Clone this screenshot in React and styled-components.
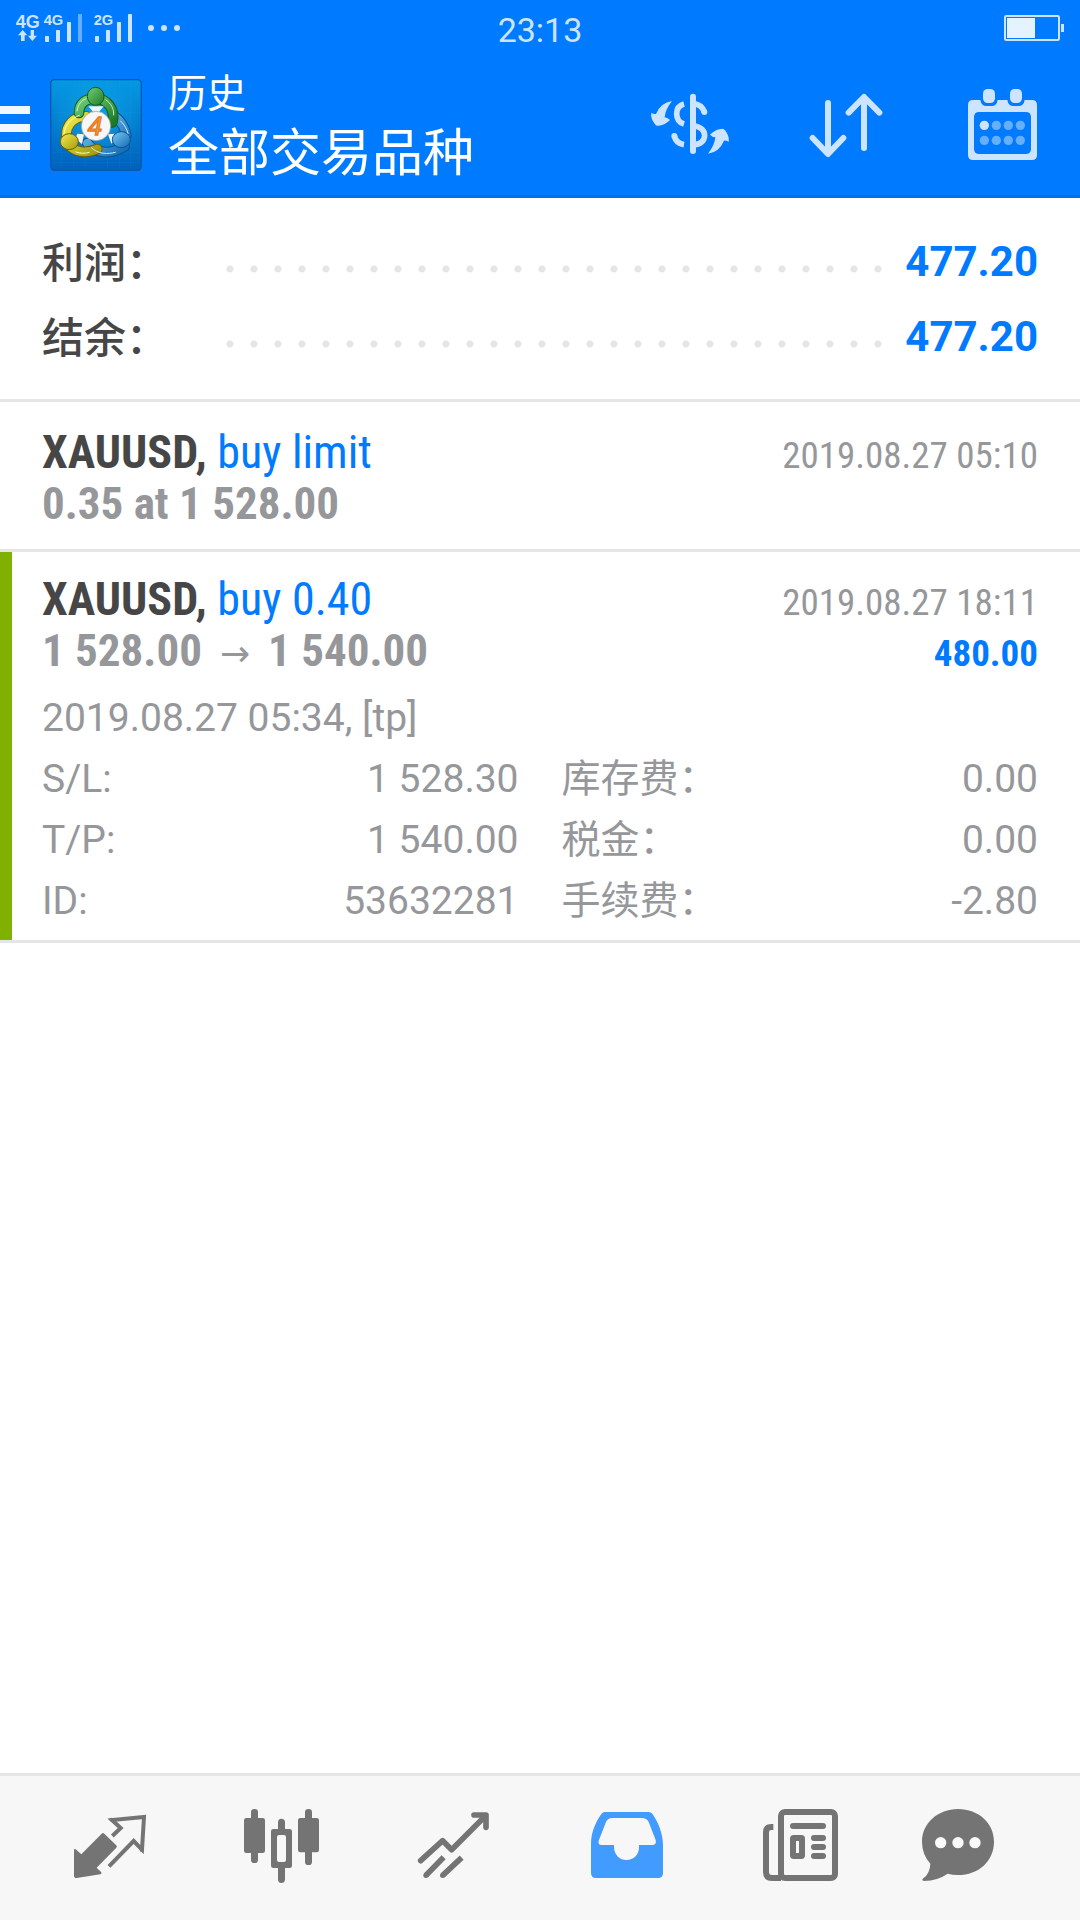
import React from 'react';
import styled, { createGlobalStyle } from 'styled-components';

const summary = [
	{ label: '利润：', value: '477.20' },
	{ label: '结余：', value: '477.20' }
];

const orders = [
	{
		symbol: 'XAUUSD',
		side: 'buy limit',
		time: '2019.08.27 05:10',
		price: ['0.35 at 1 528.00']
	},
	{
		symbol: 'XAUUSD',
		side: 'buy 0.40',
		time: '2019.08.27 18:11',
		price: ['1 528.00', '1 540.00'],
		profit: '480.00',
		comment: '2019.08.27 05:34, [tp]',
		takeProfit: true,
		details: [
			['S/L:', '1 528.30'],
			['库存费：', '0.00'],
			['T/P:', '1 540.00'],
			['税金：', '0.00'],
			['ID:', '53632281'],
			['手续费：', '-2.80']
		]
	}
];

const GlobalStyle = createGlobalStyle`
	* {
		box-sizing: border-box;
	}
	body {
		margin: 0;
		background: #fff;
		font-family: Roboto, 'Noto Sans CJK SC', sans-serif;
	}
	button {
		border: none;
		padding: 0;
		background: transparent;
		font: inherit;
		cursor: pointer;
	}
	svg {
		display: block;
	}
`;

const narrow = `'Roboto Condensed', 'Liberation Sans Narrow', Roboto, sans-serif`;

const Page = styled.div`
	display: flex;
	flex-direction: column;
	min-height: 100vh;
`;
const Header = styled.header`
	background: #007aff;
	border-bottom: 3px solid #006ee6;
`;
const StatusBar = styled.div`
	display: grid;
	grid-template-columns: 1fr auto 1fr;
	align-items: center;
	height: 55px;
	padding: 0 16px;
`;
const Clock = styled.time`
	padding-top: 4px;
	font-size: 34px;
	line-height: 40px;
	color: #cce4ff;
`;
const Battery = styled.svg`
	justify-self: end;
`;
const Toolbar = styled.div`
	display: flex;
	align-items: center;
	height: 140px;
`;
const Logo = styled.svg`
	margin: 0 26px 0 20px;
`;
const Titles = styled.div`
	flex: 1;
	padding-top: 6px;
	color: #fff;
`;
const Section = styled.div`
	font-size: 39px;
	line-height: 52px;
`;
const Title = styled.h1`
	margin: 0;
	font-size: 51px;
	font-weight: 400;
	line-height: 68px;
`;
const ToolButton = styled.button`
	display: flex;
	justify-content: center;
	width: 156px;
	color: #cce4ff;
`;

const Summary = styled.dl`
	margin: 0;
	padding: 26px 42px 25px;
	border-bottom: 3px solid #e5e5e5;
`;
const SummaryRow = styled.div`
	display: flex;
	align-items: center;
	height: 75px;
	font-size: 42px;
	font-weight: 700;
`;
const SummaryLabel = styled.dt`
	width: 184px;
	padding-bottom: 4px;
	font-weight: 500;
	color: #464646;
`;
const Dots = styled.span`
	flex: 1;
	height: 8px;
	margin: 14px 22px 0 0;
	background: radial-gradient(circle at 4px 4px, #e5e5e5 3px, transparent 4px) 0 0 / 24px 8px repeat-x;
`;
const SummaryValue = styled.dd`
	margin: 0;
	color: #007aff;
`;

const Main = styled.main`
	flex: 1;
`;
const Orders = styled.section`
	padding-top: 3px;
`;
const Order = styled.article`
	padding: 22px 42px ${p => (p.$expanded ? '8px' : '20px')} 30px;
	border-left: 12px solid ${p => (p.$takeProfit ? '#80b000' : 'transparent')};
`;
const Divider = styled.hr`
	height: 3px;
	margin: 0;
	border: none;
	background: #e5e5e5;
`;
const OrderRow = styled.div`
	display: flex;
	justify-content: space-between;
	align-items: baseline;
	height: 51px;
	font-family: ${narrow};
	line-height: 51px;
`;
const Symbol = styled.h2`
	margin: 0;
	font-size: 46px;
	color: #464646;
`;
const Side = styled.span`
	font-weight: 400;
	color: #007aff;
`;
const Time = styled.time`
	font-size: 37px;
	line-height: 40px;
	color: #96979b;
`;
const Price = styled.span`
	font-size: 45px;
	font-weight: 700;
	color: #96979b;
`;
const Arrow = styled.span`
	padding: 0 18px;
	font-family: 'DejaVu Sans', sans-serif;
	font-size: 36px;
	font-weight: 400;
	line-height: 36px;
`;
const Profit = styled.span`
	font-size: 37px;
	font-weight: 700;
	line-height: 40px;
	color: #007aff;
`;
const Comment = styled.p`
	margin: 12px 0 0;
	font-size: 39px;
	line-height: 61px;
	color: #96979b;
`;
const Details = styled.dl`
	display: grid;
	grid-template-columns: 1fr 1fr;
	column-gap: 43px;
	margin: 0;
`;
const Detail = styled.div`
	display: flex;
	justify-content: space-between;
	height: 61px;
	font-size: 39px;
	line-height: 61px;
	color: #96979b;

	dd {
		margin: 0;
	}
`;
const DetailLabel = styled.dt`
	font-weight: 400;
`;

const TabBar = styled.nav`
	display: flex;
	align-items: center;
	height: 147px;
	padding: 0 24px;
	background: #f7f7f7;
	border-top: 3px solid #e5e5e5;
`;
const Tab = styled.button`
	display: flex;
	flex: 1;
	justify-content: center;
	color: ${p => (p.$active ? '#429bff' : '#747474')};
`;

const Signal = () => (
	<svg width='168' height='34' viewBox='48 30 504 102' fill='#cce4ff'>
		<g fontFamily='Liberation Sans' fontWeight='700'>
			<text x='47' y='81' fontSize='54'>4G</text>
			<text x='131' y='72' fontSize='44'>4G</text>
			<text x='281' y='72' fontSize='44'>2G</text>
		</g>
		<path d='M68 87l14 16h-8v17H63v-17H54zM97 120L84 104h8V87h10v17h9z' />
		<rect x='135' y='105' width='12' height='18' rx='2' />
		<rect x='168' y='87' width='12' height='36' rx='2' />
		<rect x='201' y='63' width='12' height='60' rx='2' />
		<rect x='234' y='39' width='12' height='84' rx='2' opacity='.5' />
		<rect x='285' y='105' width='12' height='18' rx='2' />
		<rect x='318' y='87' width='12' height='36' rx='2' />
		<rect x='351' y='63' width='12' height='60' rx='2' />
		<rect x='384' y='39' width='12' height='84' rx='2' />
		<circle cx='453' cy='81' r='9' />
		<circle cx='492' cy='81' r='9' />
		<circle cx='531' cy='81' r='9' />
	</svg>
);

const MenuIcon = () => (
	<svg width='30' height='90' viewBox='0 80 30 90' fill='#f0f7ff'>
		<path d='M0 106h30v8H0zM0 124h30v8H0zM0 142h30v8H0z' />
	</svg>
);

const AppLogo = () => (
	<Logo width='92' height='92' viewBox='150 240 276 276'>
		<defs>
			<linearGradient id='tile' x1='0' y1='0' x2='0' y2='1'>
				<stop offset='0' stopColor='#0598e2' />
				<stop offset='1' stopColor='#0062bd' />
			</linearGradient>
			<radialGradient id='glow'>
				<stop offset='0' stopColor='#18b4f0' stopOpacity='.6' />
				<stop offset='1' stopColor='#18b4f0' stopOpacity='0' />
			</radialGradient>
			<linearGradient id='green' x1='0' y1='0' x2='1' y2='1'>
				<stop offset='0' stopColor='#74cf78' />
				<stop offset='1' stopColor='#1c7a26' />
			</linearGradient>
			<linearGradient id='yellow' x1='0' y1='0' x2='1' y2='1'>
				<stop offset='0' stopColor='#f4ec4a' />
				<stop offset='1' stopColor='#a39a12' />
			</linearGradient>
			<linearGradient id='blue' x1='0' y1='0' x2='1' y2='1'>
				<stop offset='0' stopColor='#7cc8f2' />
				<stop offset='1' stopColor='#0f6bb4' />
			</linearGradient>
		</defs>
		<rect x='152' y='242' width='272' height='272' rx='12' fill='url(#tile)' stroke='#0757ac' strokeWidth='4' />
		<path
			d='M185 244v268M220 244v268M255 244v268M323 244v268M358 244v268M392 244v268M154 300h268M154 340h268M154 460h268M154 490h268'
			stroke='#3cb2ee'
			strokeOpacity='.14'
			strokeWidth='2'
		/>
		<circle cx='288' cy='360' r='130' fill='url(#glow)' />
		<g fill='none' strokeLinecap='round'>
			<path d='M342 352C362 362 376 388 379 410M262 432C282 462 330 470 374 442' stroke='#0c4f92' strokeWidth='32' />
			<path d='M342 352C362 362 376 388 379 410M262 432C282 462 330 470 374 442' stroke='url(#blue)' strokeWidth='26' />
			<path d='M259 352C222 352 198 376 199 412M212 444C236 464 262 462 292 450' stroke='#676008' strokeWidth='32' />
			<path d='M259 352C222 352 198 376 199 412M212 444C236 464 262 462 292 450' stroke='url(#yellow)' strokeWidth='26' />
			<path d='M237 342C237 312 258 298 287 298C320 300 348 330 337 370' stroke='#125b1b' strokeWidth='32' />
			<path d='M237 342C237 312 258 298 287 298C320 300 348 330 337 370' stroke='url(#green)' strokeWidth='26' />
			<path d='M231 336C234 316 244 304 258 299M318 303C334 314 342 330 341 348' stroke='#c9f3c6' strokeWidth='3' />
			<path d='M192 404C194 380 212 358 238 349M228 459C240 464 256 464 268 460' stroke='#fffbb0' strokeWidth='3' />
			<path d='M274 446C294 466 324 466 346 460M362 366C374 378 382 392 384 404' stroke='#c9eaff' strokeWidth='3' />
		</g>
		<path d='M265 322h46l-14 16h-18zM232 404l20 2-6 30-20-18zM346 404l-22 2 10 28 14-14z' fill='#f2f5ef' />
		<ellipse cx='287' cy='292' rx='25' ry='27' fill='url(#green)' stroke='#125b1b' strokeWidth='3' />
		<ellipse cx='208' cy='428' rx='27' ry='24' fill='url(#yellow)' stroke='#676008' strokeWidth='3' />
		<ellipse cx='364' cy='422' rx='27' ry='24' fill='url(#blue)' stroke='#0c4f92' strokeWidth='3' />
		<circle cx='288' cy='381' r='44' fill='#f6f7f8' stroke='#9a9a9a' strokeWidth='2' />
		<text
			x='285'
			y='407'
			textAnchor='middle'
			fontFamily='Liberation Sans'
			fontStyle='italic'
			fontWeight='400'
			fontSize='78'
			fill='#fba92c'
			stroke='#e87a25'
			strokeWidth='4'
		>
			4
		</text>
	</Logo>
);

const CurrencyIcon = () => (
	<svg width='96' height='96' viewBox='66 51 288 288' fill='none' stroke='currentColor' strokeWidth='17'>
		<path d='M219 110v163' strokeWidth='18' strokeLinecap='round' />
		<path d='M219 131Q245 133 253 156M192 132Q170 138 170 161Q170 185 192 192M163 228Q168 250 192 254M222 197Q254 203 254 227Q252 251 222 254' />
		<g fill='currentColor' stroke='none'>
			<circle cx='253' cy='156' r='9' />
			<circle cx='163' cy='228' r='9' />
			<path id='swap' d='M156 123Q122 128 108 162Q100 163 94 158Q91 175 105 193Q109 199 117 197Q135 195 150 180Q142 172 134 172Q136 148 156 123Z' />
			<use href='#swap' transform='rotate(180 210 202)' />
		</g>
	</svg>
);

const SortIcon = () => (
	<svg width='96' height='96' viewBox='534 51 288 288' fill='none' stroke='currentColor' strokeWidth='18' strokeLinecap='round' strokeLinejoin='round'>
		<path d='M624 129v150M578 234l46 48 46-48M732 264V114M686 158l46-47 46 47' />
	</svg>
);

const CalendarIcon = () => (
	<svg width='96' height='96' viewBox='1002 51 288 288' fill='currentColor'>
		<path
			fillRule='evenodd'
			d='M1059 120H1081Q1084 138 1099 138H1115Q1130 138 1133 120H1162Q1165 138 1180 138H1196Q1211 138 1214 120H1236Q1251 120 1251 135V285Q1251 300 1236 300H1059Q1044 300 1044 285V135Q1044 120 1059 120ZM1078 156Q1062 156 1062 172V266Q1062 282 1078 282H1217Q1233 282 1233 266V172Q1233 156 1217 156Z'
		/>
		<rect x='1089' y='87' width='36' height='42' rx='14' />
		<rect x='1170' y='87' width='36' height='42' rx='14' />
		<circle cx='1093' cy='196' r='14' />
		<g opacity='.5'>
			<circle cx='1129' cy='196' r='14' />
			<circle cx='1165' cy='196' r='14' />
			<circle cx='1201' cy='196' r='14' />
			<circle cx='1093' cy='241' r='14' />
			<circle cx='1129' cy='241' r='14' />
			<circle cx='1165' cy='241' r='14' />
			<circle cx='1201' cy='241' r='14' />
		</g>
	</svg>
);

const QuotesIcon = () => (
	<svg width='96' height='96' viewBox='6 30 288 288' fill='currentColor'>
		<path d='M42 180Q42 175 47 178L64 193L125 131Q129 127 133 131L168 165Q173 169 169 173L110 233L124 247Q126 251 121 253L50 264Q42 264 42 257Z' />
		<path d='M157 138L182 114L156 90L252 81L246 179L221 153L147 229' fill='none' stroke='currentColor' strokeWidth='12' />
		<circle cx='155' cy='89' r='6' />
		<circle cx='245' cy='180' r='6' />
	</svg>
);

const ChartIcon = () => (
	<svg width='96' height='96' viewBox='522 30 288 288' fill='currentColor'>
		<rect x='573' y='57' width='21' height='162' rx='10' />
		<rect x='552' y='84' width='63' height='105' rx='7' />
		<rect x='735' y='57' width='21' height='168' rx='10' />
		<rect x='714' y='84' width='63' height='103' rx='7' />
		<path
			fillRule='evenodd'
			d='M654 117V97Q654 86 664 86Q675 86 675 97V117H689Q696 117 696 124V227Q696 234 689 234H675V268Q675 279 664 279Q654 279 654 268V234H640Q633 234 633 227V124Q633 117 640 117ZM657 135Q651 135 651 141V210Q651 216 657 216H672Q678 216 678 210V141Q678 135 672 135Z'
		/>
	</svg>
);

const TradeIcon = () => (
	<svg width='96' height='96' viewBox='1038 30 288 288' fill='none' stroke='currentColor' strokeWidth='17'>
		<path d='M1082 212L1148 152L1175 179L1276 78M1242 75H1278V112' strokeLinecap='round' strokeLinejoin='round' />
		<path d='M1098 256L1151 202M1148 256L1205 203' />
		<g fill='currentColor' stroke='none'>
			<circle cx='1098' cy='256' r='8' />
			<circle cx='1148' cy='256' r='8' />
		</g>
	</svg>
);

const HistoryIcon = () => (
	<svg width='96' height='96' viewBox='24 30 288 288' fill='currentColor'>
		<path
			fillRule='evenodd'
			d='M63 162C63 125 80 90 96 70Q100 66 106 66H235Q243 66 247 71C264 95 279 130 279 165V249Q279 264 264 264H78Q63 264 63 249ZM127 84Q113 84 108 96L86 152Q84 165 94 165H132V170C132 194 149 210 170 210C190 210 207 196 207 172V165H249Q260 163 257 150L236 96Q231 84 214 84Z'
		/>
	</svg>
);

const NewsIcon = () => (
	<svg width='96' height='96' viewBox='540 30 288 288' fill='none' stroke='currentColor' strokeWidth='18'>
		<rect x='633' y='66' width='162' height='198' rx='12' />
		<path d='M610 111H604Q588 111 588 127V246Q588 264 606 264H633' />
		<rect x='669' y='144' width='27' height='54' rx='2' />
		<path d='M669 108h90M732 144h27M732 171h27M732 198h27' strokeLinecap='round' />
	</svg>
);

const ChatIcon = () => (
	<svg width='96' height='96' viewBox='1056 30 288 288' fill='currentColor'>
		<path d='M1164 57C1226 57 1272 100 1272 155C1272 213 1226 255 1164 255Q1147 255 1133 251Q1103 272 1062 273Q1053 271 1060 265Q1080 250 1081 221Q1056 193 1056 155C1056 100 1104 57 1164 57Z' />
		<g fill='#fafafa'>
			<circle cx='1112' cy='158' r='17' />
			<circle cx='1164' cy='158' r='17' />
			<circle cx='1215' cy='158' r='17' />
		</g>
	</svg>
);

const tabs = [
	{ id: 'quotes', icon: QuotesIcon },
	{ id: 'chart', icon: ChartIcon },
	{ id: 'trade', icon: TradeIcon },
	{ id: 'history', icon: HistoryIcon },
	{ id: 'news', icon: NewsIcon },
	{ id: 'chat', icon: ChatIcon }
];

const OrderItem = ({ order }) => (
	<>
		<Order $takeProfit={order.takeProfit} $expanded={!!order.details}>
			<OrderRow>
				<Symbol>
					{order.symbol}, <Side>{order.side}</Side>
				</Symbol>
				<Time>{order.time}</Time>
			</OrderRow>
			<OrderRow>
				<Price>
					{order.price[0]}
					{order.price[1] && <Arrow>→</Arrow>}
					{order.price[1]}
				</Price>
				{order.profit && <Profit>{order.profit}</Profit>}
			</OrderRow>
			{order.comment && <Comment>{order.comment}</Comment>}
			{order.details && (
				<Details>
					{order.details.map(([label, value]) => (
						<Detail key={label}>
							<DetailLabel>{label}</DetailLabel>
							<dd>{value}</dd>
						</Detail>
					))}
				</Details>
			)}
		</Order>
		<Divider />
	</>
);

class App extends React.Component {
	state = {
		tab: 'history'
	};
	render() {
		return (
			<Page>
				<GlobalStyle />
				<Header>
					<StatusBar>
						<Signal />
						<Clock>23:13</Clock>
						<Battery width='60' height='26' viewBox='132 42 180 78'>
							<rect x='135' y='45' width='162' height='72' rx='4' fill='none' stroke='#cce4ff' strokeWidth='6' />
							<path d='M141 51h84v60h-84z' fill='#e5f2ff' />
							<path d='M303 69h9v24h-9z' fill='#cce4ff' />
						</Battery>
					</StatusBar>
					<Toolbar>
						<button aria-label='menu'>
							<MenuIcon />
						</button>
						<AppLogo />
						<Titles>
							<Section>历史</Section>
							<Title>全部交易品种</Title>
						</Titles>
						<ToolButton aria-label='currency'>
							<CurrencyIcon />
						</ToolButton>
						<ToolButton aria-label='sort'>
							<SortIcon />
						</ToolButton>
						<ToolButton aria-label='calendar'>
							<CalendarIcon />
						</ToolButton>
					</Toolbar>
				</Header>
				<Main>
					<Summary>
						{summary.map(row => (
							<SummaryRow key={row.label}>
								<SummaryLabel>{row.label}</SummaryLabel>
								<Dots />
								<SummaryValue>{row.value}</SummaryValue>
							</SummaryRow>
						))}
					</Summary>
					<Orders>
						{orders.map(order => (
							<OrderItem key={order.time} order={order} />
						))}
					</Orders>
				</Main>
				<TabBar>
					{tabs.map(({ id, icon: Icon }) => (
						<Tab
							key={id}
							aria-label={id}
							$active={this.state.tab === id}
							onClick={() => this.setState({ tab: id })}
						>
							<Icon />
						</Tab>
					))}
				</TabBar>
			</Page>
		);
	}
}

export default App;
